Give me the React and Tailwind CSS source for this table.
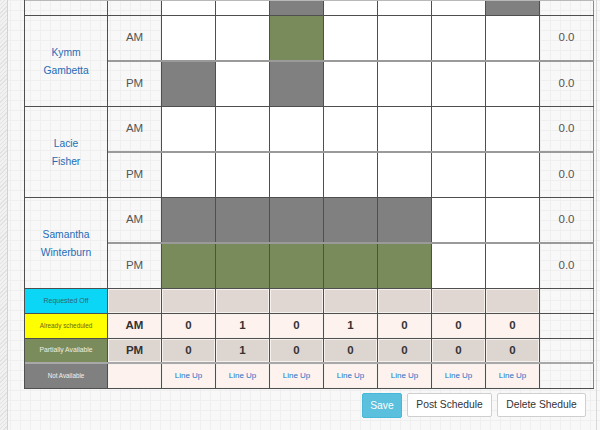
import React from 'react'

const DAYS = [0, 1, 2, 3, 4, 5, 6]
const GRAY = 'bg-[#808080]'
const GREEN = 'bg-[#798b5b]'

const people = [
  { first: 'Kymm', last: 'Gambetta', am: { 2: GREEN }, pm: { 0: GRAY, 2: GRAY } },
  { first: 'Lacie', last: 'Fisher', am: {}, pm: {} },
  {
    first: 'Samantha', last: 'Winterburn',
    am: { 0: GRAY, 1: GRAY, 2: GRAY, 3: GRAY, 4: GRAY },
    pm: { 0: GREEN, 1: GREEN, 2: GREEN, 3: GREEN, 4: GREEN },
  },
]

const amCounts = [0, 1, 0, 1, 0, 0, 0]
const pmCounts = [0, 1, 0, 0, 0, 0, 0]

const cell = 'w-[54px] shrink-0 border-r border-[#4f4f4f]'
const inset = 'shadow-[inset_0_0_0_1px_#f7f1ee]'

function ShiftRow({ label, fills, last }) {
  return (
    <div className={`flex ${last ? 'h-[45px] border-b border-[#4f4f4f]' : 'h-[46px] border-b-2 border-[#9a9a9a]'}`}>
      <div className={`${cell} flex items-center justify-center text-[11.5px] text-[#555]`}>{label}</div>
      {DAYS.map((d) => (
        <div key={d} className={`${cell} ${fills[d] ?? 'bg-white'}`} />
      ))}
      <div className={`${cell} border-r-[#8a8a8a] flex items-center justify-center text-[11.5px] text-[#555]`}>0.0</div>
    </div>
  )
}

function Person({ p }) {
  return (
    <div className="flex">
      <div className="flex w-[83px] shrink-0 flex-col items-center justify-center border-r border-b border-[#4f4f4f] pt-[2px] text-[10.3px] leading-[18px] text-[#1f6cb6]">
        <span>{p.first}</span>
        <span>{p.last}</span>
      </div>
      <div className="flex flex-col">
        <ShiftRow label="AM" fills={p.am} />
        <ShiftRow label="PM" fills={p.pm} last />
      </div>
    </div>
  )
}

function LegendRow({ legend, legendCls, slotCls, slot, dayCls, children, bottom = 'border-[#4f4f4f]' }) {
  return (
    <div className={`flex h-[25px] border-b ${bottom}`}>
      <div className={`flex w-[83px] shrink-0 items-center justify-center border-r border-[#4f4f4f] ${legendCls}`}>{legend}</div>
      <div className={`${cell} ${slotCls} ${inset} flex items-center justify-center text-[11.5px] font-bold text-[#333]`}>{slot}</div>
      {DAYS.map((d) => (
        <div key={d} className={`${cell} ${dayCls} ${inset} flex items-center justify-center`}>
          {children ? children(d) : null}
        </div>
      ))}
      <div className={`${cell} border-r-[#8a8a8a]`} />
    </div>
  )
}

export default function App() {
  return (
    <div className="flex h-[430px] w-[600px] overflow-hidden bg-[#f8f8f8] bg-[image:linear-gradient(#efefef_1px,transparent_1px),linear-gradient(90deg,#efefef_1px,transparent_1px)] bg-[size:10px_10px] font-['Liberation_Sans',Arial,sans-serif]">
      <div className="h-full w-[8px] shrink-0 border-r border-[#d2d2d2] bg-[#f1f1f1] bg-[image:repeating-linear-gradient(135deg,#e2e2e2_0px,#e2e2e2_1px,transparent_1px,transparent_3px)]" />
      <div className="ml-[16px] flex flex-col">
        <div className="w-[570px] border-l border-[#4f4f4f]">
          {/* tail of the row scrolled above */}
          <div className="flex h-[16px] border-t border-b border-t-[#b8b8b8] border-b-[#4f4f4f]">
            <div className="w-[83px] shrink-0 border-r border-[#4f4f4f]" />
            <div className={cell} />
            {DAYS.map((d) => (
              <div key={d} className={`${cell} ${d === 2 || d === 6 ? GRAY : 'bg-white'}`} />
            ))}
            <div className={`${cell} border-r-[#8a8a8a]`} />
          </div>
          {people.map((p) => (
            <Person key={p.first} p={p} />
          ))}
          <LegendRow
            legend={<span className="text-[7px] text-[#2f6670]">Requested Off</span>}
            legendCls="bg-[#0cd6f6]"
            slotCls="bg-[#e0d7d2]"
            dayCls="bg-[#e0d7d2]"
          />
          <LegendRow
            legend={<span className="text-[6.4px] text-[#6b6b12]">Already scheduled</span>}
            legendCls="bg-[#ffff00]"
            slotCls="bg-[#fdf2ee]"
            slot="AM"
            dayCls="bg-[#fdf2ee]"
          >
            {(d) => <span className="text-[11.5px] font-bold text-[#333]">{amCounts[d]}</span>}
          </LegendRow>
          <LegendRow
            legend={<span className="text-[6.8px] text-[#eef0e0]">Partially Available</span>}
            legendCls="bg-[#7a8b5c]"
            slotCls="bg-[#ddd5d0]"
            slot="PM"
            dayCls="bg-[#ddd5d0]"
            bottom="border-b-2 border-[#a8a8a8]"
          >
            {(d) => <span className="text-[11.5px] font-bold text-[#333]">{pmCounts[d]}</span>}
          </LegendRow>
          <LegendRow
            legend={<span className="text-[6.3px] text-[#f2f2f2]">Not Available</span>}
            legendCls="bg-[#808080]"
            slotCls="bg-[#fdf2ee]"
            dayCls="bg-[#fdf2ee]"
          >
            {() => <span className="text-[8px] text-[#1a74c6]">Line Up</span>}
          </LegendRow>
        </div>
        <div className="mt-[4px] flex w-[570px] justify-end gap-[5px] pr-[8px]">
          <button className="h-[25px] w-[40px] rounded-[2px] border border-[#46b8da] bg-[#5bc0de] text-[10.3px] text-white">
            Save
          </button>
          <button className="h-[24px] w-[85px] rounded-[2px] border border-[#cfcfcf] bg-white text-[10.3px] text-[#333]">
            Post Schedule
          </button>
          <button className="h-[24px] w-[89px] rounded-[2px] border border-[#cfcfcf] bg-white text-[10.3px] text-[#333]">
            Delete Shedule
          </button>
        </div>
      </div>
      <div className="ml-[2px] h-full border-l border-[#d8d8d8]" />
    </div>
  )
}
